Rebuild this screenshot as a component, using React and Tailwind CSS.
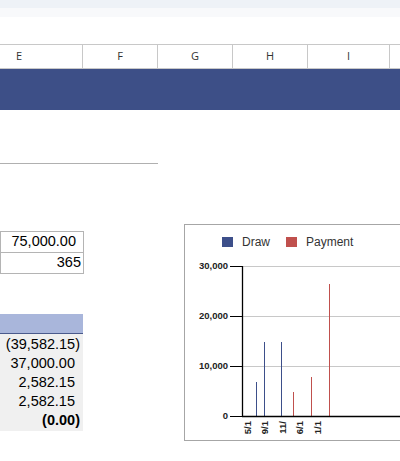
const cols = [
  { label: 'E', w: 'w-[83px]', align: 'justify-start pl-[16px]' },
  { label: 'F', w: 'w-[75px]', align: 'justify-center' },
  { label: 'G', w: 'w-[75px]', align: 'justify-center' },
  { label: 'H', w: 'w-[75px]', align: 'justify-center' },
  { label: 'I', w: 'w-[82px]', align: 'justify-center' },
  { label: '', w: 'w-[75px]', align: 'justify-center' },
];

const rows = [
  { v: '(39,582.15)', pr: 'pr-[3px]', bold: false },
  { v: '37,000.00', pr: 'pr-[8px]', bold: false },
  { v: '2,582.15', pr: 'pr-[8px]', bold: false },
  { v: '2,582.15', pr: 'pr-[8px]', bold: false },
  { v: '(0.00)', pr: 'pr-[3px]', bold: true },
];

// chart coordinates are relative to the chart box
const bars = [
  { x: 71.5, top: 157, c: '#3d4f8a' },
  { x: 79.5, top: 117, c: '#3d4f8a' },
  { x: 96.5, top: 117, c: '#3d4f8a' },
  { x: 108.5, top: 167, c: '#c0504d' },
  { x: 126.5, top: 152, c: '#c0504d' },
  { x: 144.5, top: 59, c: '#c0504d' },
];

const ticks = [
  { y: 41.5, t: '30,000' },
  { y: 91.5, t: '20,000' },
  { y: 141.5, t: '10,000' },
  { y: 191.5, t: '0' },
];

const xLabels = [
  { x: 63, t: '5/1' },
  { x: 80, t: '9/1' },
  { x: 98, t: '11/' },
  { x: 115, t: '6/1' },
  { x: 133, t: '1/1' },
];

const font = "'Liberation Sans', Arial, sans-serif";

const Chart = () => (
  <div className="relative ml-[26px] mt-[114px] h-[217px] w-[260px] shrink-0 border border-[#a6a6a6] bg-white">
    <svg width="260" height="217" className="absolute left-0 top-0">
      {ticks.map((k) => (
        <g key={k.t}>
          {k.y < 190 && <line x1="58" x2="260" y1={k.y} y2={k.y} stroke="#c8c8c8" strokeWidth="1" />}
          <line x1="45" x2="58" y1={k.y} y2={k.y} stroke="#000" strokeWidth="1" />
          <text x="43" y={k.y} textAnchor="end" dominantBaseline="middle" fontSize="9.5" fontWeight="700" fill="#222" fontFamily={font}>
            {k.t}
          </text>
        </g>
      ))}
      {bars.map((b, i) => (
        <line key={i} x1={b.x} x2={b.x} y1={b.top} y2="191" stroke={b.c} strokeWidth="1" />
      ))}
      <line x1="57.5" x2="57.5" y1="41" y2="192" stroke="#000" strokeWidth="1.3" />
      <line x1="57" x2="260" y1="191.5" y2="191.5" stroke="#000" strokeWidth="1.3" />
      {xLabels.map((l) => (
        <text
          key={l.x}
          x={l.x}
          y="196"
          transform={`rotate(-90 ${l.x} 196)`}
          textAnchor="end"
          dominantBaseline="middle"
          fontSize="9.5"
          fontWeight="700"
          fill="#222"
          fontFamily={font}
        >
          {l.t}
        </text>
      ))}
    </svg>
    <div className="relative flex items-center pl-[37px] pt-[8px] text-[12px] text-[#333]">
      <span className="h-[10px] w-[11px] bg-[#3d4f8a]" />
      <span className="ml-[9px]">Draw</span>
      <span className="ml-[16px] h-[10px] w-[11px] bg-[#c0504d]" />
      <span className="ml-[9px]">Payment</span>
    </div>
  </div>
);

export default function App() {
  return (
    <div className="h-[461px] w-[400px] overflow-hidden bg-white font-['Liberation_Sans',Arial,sans-serif]">
      <div className="h-[8px] bg-[#eef2f7]" />
      <div className="h-[9px] bg-[#f8f9fb]" />
      <div className="h-[27px]" />
      <div className="flex h-[25px] w-max border-y border-[#c8c8c8] font-['Open_Sans',Arial,sans-serif] text-[11px] text-[#333]">
        {cols.map((c, i) => (
          <div key={i} className={`flex items-center ${c.w} ${c.align} border-r border-[#c8c8c8]`}>
            {c.label}
          </div>
        ))}
      </div>
      <div className="h-[41px] bg-[#3d4f87]" />
      <div className="flex">
        <div className="w-[158px] shrink-0">
          <div className="mt-[53px] h-px w-[158px] bg-[#b0b0b0]" />
          <div className="mt-[67px] w-[84px] text-[14.5px] text-black">
            <div className="flex h-[22px] items-center justify-end border border-[#b4b4b4] pr-[7px]">75,000.00</div>
            <div className="flex h-[21px] items-center justify-end border border-t-0 border-[#b4b4b4] pr-[2px]">365</div>
          </div>
          <div className="mt-[40px] w-[83px]">
            <div className="h-[20px] border-b border-[#4a5a8c] bg-[#a9b6db]" />
            <div className="bg-[#f0f0f0] pb-[1px] pt-[1px] text-[14.5px] text-black">
              {rows.map((r, i) => (
                <div key={i} className={`flex h-[19px] items-center justify-end ${r.pr} ${r.bold ? 'font-bold' : ''}`}>
                  {r.v}
                </div>
              ))}
            </div>
          </div>
        </div>
        <Chart />
      </div>
    </div>
  );
}
